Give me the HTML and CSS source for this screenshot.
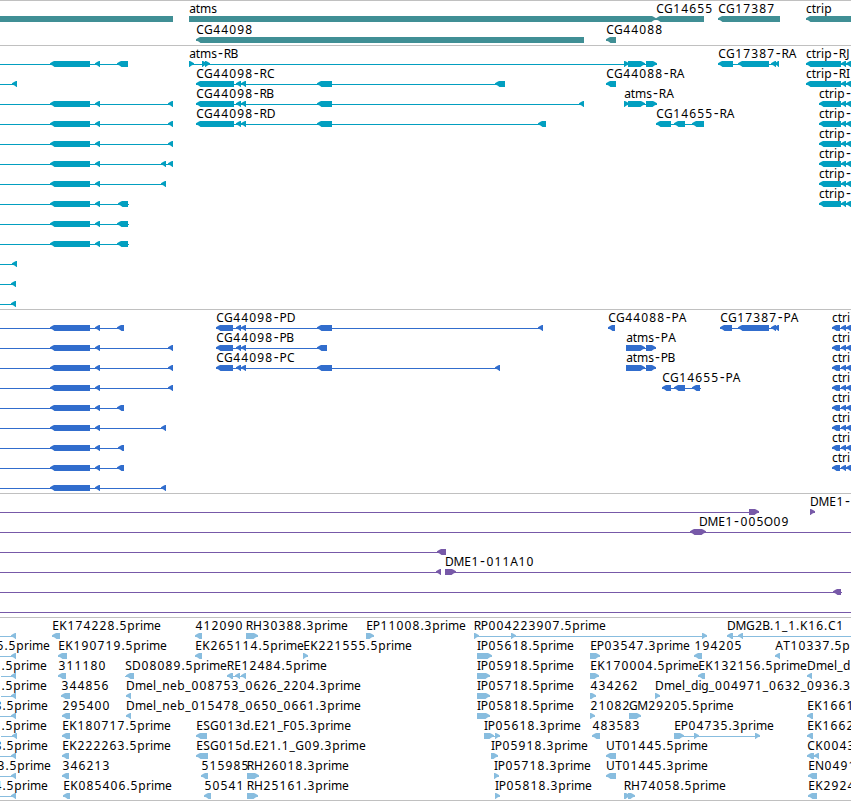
FILE: index.html
```html
<!DOCTYPE html>
<html lang="en">
<head>
  <meta charset="UTF-8">
  <title>Genome Tracks</title>
  <link rel="stylesheet" href="styles.css">
</head>
<body>
  <main id="browser"></main>
  <script src="tracks.js"></script>
</body>
</html>
```

FILE: styles.css
```css
body {
  margin: 0;
  background: #fff;
  overflow: hidden;
}
#browser {
  display: flex;
  flex-direction: column;
  width: 851px;
  border-bottom: 1px solid #c0c0c0;
}
.track {
  display: flex;
  flex-direction: column;
  border-top: 1px solid #c0c0c0;
  padding-bottom: 3px;
}
.row {
  display: block;
  width: 851px;
  height: 20px;
  overflow: visible;
}
.label {
  font-family: "Noto Sans", "DejaVu Sans", sans-serif;
  font-size: 12px;
  fill: #000;
}
.dash {
  font-family: "DejaVu Sans Mono", monospace;
  font-size: 14px;
}
.gene {
  color: #408f95;
  padding-bottom: 2px;
}
.gene .row {
  height: 21px;
}
.transcript {
  color: #029fc0;
}
.protein {
  color: #316dcd;
}
.clone {
  color: #7759a8;
}
.est {
  color: #88bddf;
  padding-bottom: 2px;
}
.shape {
  fill: currentColor;
}
```

FILE: tracks.js
```js
// item: [label, start, end, parts], part: direction + from-to
const LEFT = '<50-90 <95-100 ';
const C98 = '<196-234 <236-241 <241-246 <317-332 ';
const P98 = '<216-233 <236-241 <241-246 ';
const ctrip = ['ctrip-', 819, 851, '<819-841 <841-846 <846-851'];
const ctri = ['ctri', 832, 851, '<832-840 <841-846 <846-851'];

const tracks = [
  { type: 'gene', rows: [
    [['', 0, 173, '=0-173'], ['atms', 189, 656, '>189-656'], ['CG14655', 656, 704, '<656-704'],
     ['CG17387', 718, 780, '<718-780'], ['ctrip', 806, 851, '<806-851']],
    [['CG44098', 196, 584, '<196-584'], ['CG44088', 606, 616, '<606-616']]
  ]},
  { type: 'transcript', rows: [
    [['', 0, 128, LEFT + '<117-128'],
     ['atms-RB', 189, 657, '>189-194 >202-207 >205-210 >624-629 >628-645 >646-657'],
     ['CG17387-RA', 718, 779, '<718-733 <738-769 <771-776 <775-779'],
     ['ctrip-RJ', 806, 851, '<806-841 <841-846 <846-851']],
    [['', 0, 17, '<12-17'], ['CG44098-RC', 196, 505, C98 + '<495-505'],
     ['CG44088-RA', 606, 616, '<606-616'], ['ctrip-RI', 806, 851, '<806-841 <841-846 <846-851']],
    [['', 0, 173, LEFT + '<168-173'], ['CG44098-RB', 196, 584, C98 + '<579-584'],
     ['atms-RA', 624, 657, '>624-629 >628-645 >646-657'], ctrip],
    [['', 0, 173, LEFT + '<168-173'], ['CG44098-RD', 196, 546, C98 + '<538-546'],
     ['CG14655-RA', 656, 704, '<656-671 <674-685 <692-704'], ctrip],
    [['', 0, 173, LEFT + '<168-173'], ctrip],
    [['', 0, 173, LEFT + '<161-166 <168-173'], ctrip],
    [['', 0, 166, LEFT + '<161-166'], ctrip],
    [['', 0, 129, LEFT + '<118-128'], ctrip],
    [['', 0, 129, LEFT + '<117-128']],
    [['', 0, 129, LEFT + '<117-128']],
    [['', 0, 17, '<12-17']],
    [['', 0, 16, '<11-16']],
    [['', 0, 16, '<11-16']]
  ]},
  { type: 'protein', rows: [
    [['', 0, 124, LEFT + '<117-124'], ['CG44098-PD', 216, 543, P98 + '<317-332 <538-543'],
     ['CG44088-PA', 608, 615, '<608-615'],
     ['CG17387-PA', 720, 779, '<720-732 <738-769 <771-776 <774-779'], ctri],
    [['', 0, 173, LEFT + '<168-173'], ['CG44098-PB', 216, 327, P98 + '<317-327'],
     ['atms-PA', 626, 656, '>626-645 >646-656'], ctri],
    [['', 0, 173, LEFT + '<168-173'], ['CG44098-PC', 216, 500, P98 + '<317-332 <495-500'],
     ['atms-PB', 626, 656, '>626-645 >646-656'], ctri],
    [['', 0, 173, LEFT + '<168-173'], ['CG14655-PA', 662, 701, '<662-671 <674-685 <692-700'], ctri],
    [['', 0, 124, LEFT + '<117-124'], ctri],
    [['', 0, 166, LEFT + '<161-166'], ctri],
    [['', 0, 124, LEFT + '<118-124'], ctri],
    [['', 0, 124, LEFT + '<117-124'], ctri],
    [['', 0, 166, LEFT + '<161-166']]
  ]},
  { type: 'clone', rows: [
    [['', 0, 759, '>749-759'], ['DME1-', 810, 815, '>810-815']],
    [['', 0, 700, '<690-700'], ['DME1-005O09', 699, 851, '>699-706']],
    [['', 0, 446, '<437-446']],
    [['', 0, 441, '<436-441'], ['DME1-011A10', 445, 851, '>445-456']],
    [['', 0, 842, '<833-841']],
    [['', 0, 851, '']]
  ]},
  { type: 'est', rows: [
    [['', 0, 16, '<11-16'], ['EK174228.5prime', 52, 60, '<52-60'], ['412090', 195, 202, '<195-202'],
     ['RH30388.3prime', 246, 258, '>246-258'], ['EP11008.3prime', 366, 374, '>366-374'],
     ['RP004223907.5prime', 474, 707, '>474-479 >511-516 >702-707'],
     ['DMG2B.1_1.K16.C1', 727, 851, '<727-733 <738-743']],
    [['5.5prime', -4, 16, '<11-16'], ['EK190719.5prime', 58, 67, '<58-67'],
     ['EK265114.5prime', 195, 202, '<195-202'], ['EK221555.5prime', 303, 308, '>303-308'],
     ['IP05618.5prime', 477, 492, '>477-492'], ['EP03547.3prime', 590, 600, '>590-600'],
     ['194205', 694, 702, '<694-702'], ['AT10337.5p', 775, 780, '<775-780']],
    [['.5prime', 1, 16, '<11-16'], ['311180', 58, 66, '<58-66'], ['SD08089.5prime', 125, 134, '<126-134'],
     ['RE12484.5prime', 227, 246, '<227-233 <235-240 <241-246'], ['IP05918.5prime', 477, 490, '>477-490'],
     ['EK170004.5prime', 590, 599, '>590-599'], ['EK132156.5prime', 698, 705, '<698-705'],
     ['Dmel_d', 807, 812, '<807-812']],
    [['.5prime', 1, 16, '<11-16'], ['344856', 61, 70, '<61-70'],
     ['Dmel_neb_008753_0626_2204.3prime', 126, 131, '<126-131'], ['IP05718.5prime', 477, 490, '>477-490'],
     ['434262', 590, 596, '>590-596'], ['Dmel_dig_004971_0632_0936.3', 655, 660, '>655-660']],
    [['8.5prime', -6, 16, '<11-16'], ['295400', 62, 70, '<62-70'],
     ['Dmel_neb_015478_0650_0661.3prime', 126, 131, '<126-131'], ['IP05818.5prime', 477, 490, '>477-490'],
     ['21082', 590, 595, '>590-595'], ['GM29205.5prime', 629, 641, '>629-641'],
     ['EK1661', 807, 813, '<807-813']],
    [['.5prime', 1, 17, '<12-17'], ['EK180717.5prime', 62, 70, '<62-70'],
     ['ESG013d.E21_F05.3prime', 196, 207, '<196-207'], ['IP05618.3prime', 484, 500, '>484-494 >495-500'],
     ['483583', 592, 600, '<592-600'], ['EP04735.3prime', 674, 760, '>674-684 >694-699 >755-760'],
     ['EK1662', 807, 813, '<807-813']],
    [['8.5prime', -6, 16, '<11-16'], ['EK222263.5prime', 62, 69, '<62-69'],
     ['ESG015d.E21.1_G09.3prime', 196, 208, '<196-208'], ['IP05918.3prime', 491, 498, '>491-498'],
     ['UT01445.5prime', 606, 616, '<606-616'], ['CK0043', 807, 819, '<807-814 <814-819']],
    [['3.5prime', -3, 16, '<11-16'], ['346213', 62, 69, '<62-69'], ['515985', 201, 208, '<201-208'],
     ['RH26018.3prime', 247, 259, '>247-259'], ['IP05718.3prime', 494, 499, '>494-499'],
     ['UT01445.3prime', 606, 616, '<606-616'], ['EN0491', 808, 817, '<808-817']],
    [['4.5prime', -6, 16, '<11-16'], ['EK085406.5prime', 63, 70, '<63-70'], ['50541', 204, 211, '<204-211'],
     ['RH25161.3prime', 247, 258, '>247-258'], ['IP05818.3prime', 495, 500, '>495-500'],
     ['RH74058.5prime', 624, 635, '>624-630 >628-635'], ['EK2924', 808, 817, '<808-817']]
  ]}
];

// label cell widths in px, 8 for anything not listed
const cell = {
  '.': 4, '-': 7, _: 6, a: 7, c: 6, d: 7.5, e: 7, g: 7, i: 3, l: 3, m: 11, r: 5, s: 6, t: 4,
  B: 7, D: 9, E: 7, F: 6, G: 8.7, H: 9, I: 4, J: 4, M: 10, N: 9, O: 9, P: 7, R: 7, S: 7, T: 7, U: 9
};
const pen = document.createElement('canvas').getContext('2d');

function label(text, x) {
  const xs = [];
  for (const ch of text) {
    const w = cell[ch] || 8;
    pen.font = ch === '-' ? '14px "DejaVu Sans Mono"' : '12px "Noto Sans"';
    xs.push((x + (w - pen.measureText(ch).width) / 2).toFixed(2));
    x += w;
  }
  const body = text.replace('-', '<tspan class="dash">-</tspan>');
  return `<text class="label" x="${xs.join(' ')}" y="12">${body}</text>`;
}

// arrow head at x, s is 1 when it opens to the right and -1 to the left
function arrow(x, s, base, size) {
  const k = size * s / 5;
  return `<path class="shape" d="M${x} 17.2L${x + 2 * k} 16L${x + 4 * k} 15H${base}V21` +
    `H${x + 4.5 * k}L${x + 2.5 * k} 19.5L${x} 18.5z"/>`;
}

function part(str) {
  const [a, b] = str.slice(1).split('-').map(Number);
  const head = Math.min(5, b - a);
  if (str[0] === '<') return arrow(a, 1, b, head);
  if (str[0] === '>') return arrow(b, -1, a, head);
  return `<path class="shape" d="M${a} 15H${b}V21H${a}z"/>`;
}

function item([text, start, end, parts]) {
  return `<rect class="shape" x="${start}" y="18" width="${end - start}" height="1"/>` +
    parts.split(' ').filter(Boolean).map(part).join('') + (text ? label(text, start) : '');
}

document.getElementById('browser').innerHTML = tracks.map(t =>
  `<section class="track ${t.type}">` +
  t.rows.map(r => `<svg class="row">${r.map(item).join('')}</svg>`).join('') +
  '</section>').join('');
```
